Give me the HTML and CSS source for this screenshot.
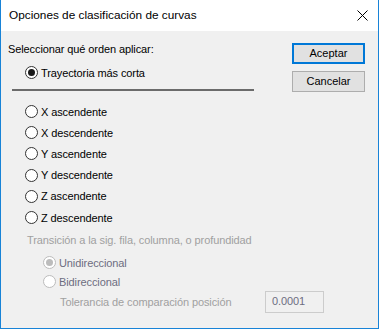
FILE: index.html
```html
<!DOCTYPE html>
<html lang="es">
<head>
    <meta charset="UTF-8">
    <title>Opciones de clasificación de curvas</title>
    <link rel="stylesheet" href="styles.css">
</head>
<body>
<div class="window">
    <div class="titlebar">
        <span class="title">Opciones de clasificación de curvas</span>
        <svg class="close" width="11" height="11" viewBox="0 0 11 11">
            <path d="M0.5 0.5 L10.5 10.5 M10.5 0.5 L0.5 10.5" stroke="#000" stroke-width="1" fill="none"/>
        </svg>
    </div>
    <div class="content">
        <div class="main">
            <div class="prompt">Seleccionar qué orden aplicar:</div>
            <div class="opt first"><span class="radio checked"></span>Trayectoria más corta</div>
            <div class="divider"></div>
            <div class="opt"><span class="radio"></span>X ascendente</div>
            <div class="opt"><span class="radio"></span>X descendente</div>
            <div class="opt"><span class="radio"></span>Y ascendente</div>
            <div class="opt"><span class="radio"></span>Y descendente</div>
            <div class="opt"><span class="radio"></span>Z ascendente</div>
            <div class="opt"><span class="radio"></span>Z descendente</div>
            <div class="group-label">Transición a la sig. fila, columna, o profundidad</div>
            <div class="opt off first-off"><span class="radio checked"></span>Unidireccional</div>
            <div class="opt off"><span class="radio"></span>Bidireccional</div>
            <div class="tolerance">
                <span class="tol-label">Tolerancia de comparación posición</span>
                <span class="field">0.0001</span>
            </div>
        </div>
        <div class="actions">
            <div class="btn default">Aceptar</div>
            <div class="btn">Cancelar</div>
        </div>
    </div>
</div>
</body>
</html>
```

FILE: styles.css
```css
*{
    padding:0;
    margin:0;
    box-sizing: border-box;
}
body{
    font-family: "Liberation Sans", Arial, sans-serif;
    font-size: 11px;
    color: #000;
    background: #fff;
}
.window{
    width: 379px;
    height: 329px;
    border: 1px solid #1883d7;
    border-top: none;
    background-color: #f0f0f0;
}
.titlebar{
    height: 31px;
    background-color: #fff;
    display: flex;
    align-items: center;
    justify-content: space-between;
    padding: 0 10px 1px 8px;
}
.title{
    font-size: 11.8px;
}
.close{
    display: block;
}
.content{
    display: flex;
    padding: 10px 13px 0 7px;
}
.main{
    flex: 1;
    min-width: 0;
    letter-spacing: -0.1px;
}
.prompt{
    line-height: 16px;
}
.opt{
    height: 21.2px;
    display: flex;
    align-items: center;
    padding-left: 17px;
}
.opt.first{
    height: 21px;
    margin-top: 5px;
}
.radio{
    width: 13px;
    height: 13px;
    border: 1px solid #333;
    border-radius: 50%;
    background-color: #fff;
    margin-right: 3px;
    display: flex;
    align-items: center;
    justify-content: center;
    flex-shrink: 0;
}
.radio.checked::after{
    content: "";
    width: 7px;
    height: 7px;
    border-radius: 50%;
    background-color: #1a1a1a;
}
.divider{
    width: 242px;
    height: 2px;
    margin: 6px 0 10px 4px;
    background-color: #6b6b6b;
}
.group-label{
    margin-top: 4px;
    line-height: 16px;
    padding-left: 19px;
    color: #a0a0a0;
    white-space: nowrap;
}
.opt.off{
    height: 19px;
    padding-left: 35px;
    color: #6d6d80;
}
.opt.first-off{
    margin-top: 5px;
}
.opt.off .radio{
    border-color: #bcbcbc;
}
.opt.off .radio.checked::after{
    background-color: #bcbcbc;
}
.tolerance{
    display: flex;
    align-items: center;
    height: 22px;
    padding-left: 52px;
    white-space: nowrap;
}
.tol-label{
    width: 205px;
    flex-shrink: 0;
    color: #a0a0a0;
}
.field{
    width: 59px;
    height: 22px;
    flex-shrink: 0;
    border: 1px solid #cccccc;
    padding: 3px 0 0 6px;
    color: #6d6d80;
}
.actions{
    display: flex;
    flex-direction: column;
    gap: 7px;
    margin-top: 2px;
}
.btn{
    width: 73px;
    height: 21px;
    border: 1px solid #adadad;
    background-color: #e1e1e1;
    text-align: center;
    line-height: 19px;
}
.btn.default{
    border: 2px solid #0078d7;
    line-height: 17px;
}
```
